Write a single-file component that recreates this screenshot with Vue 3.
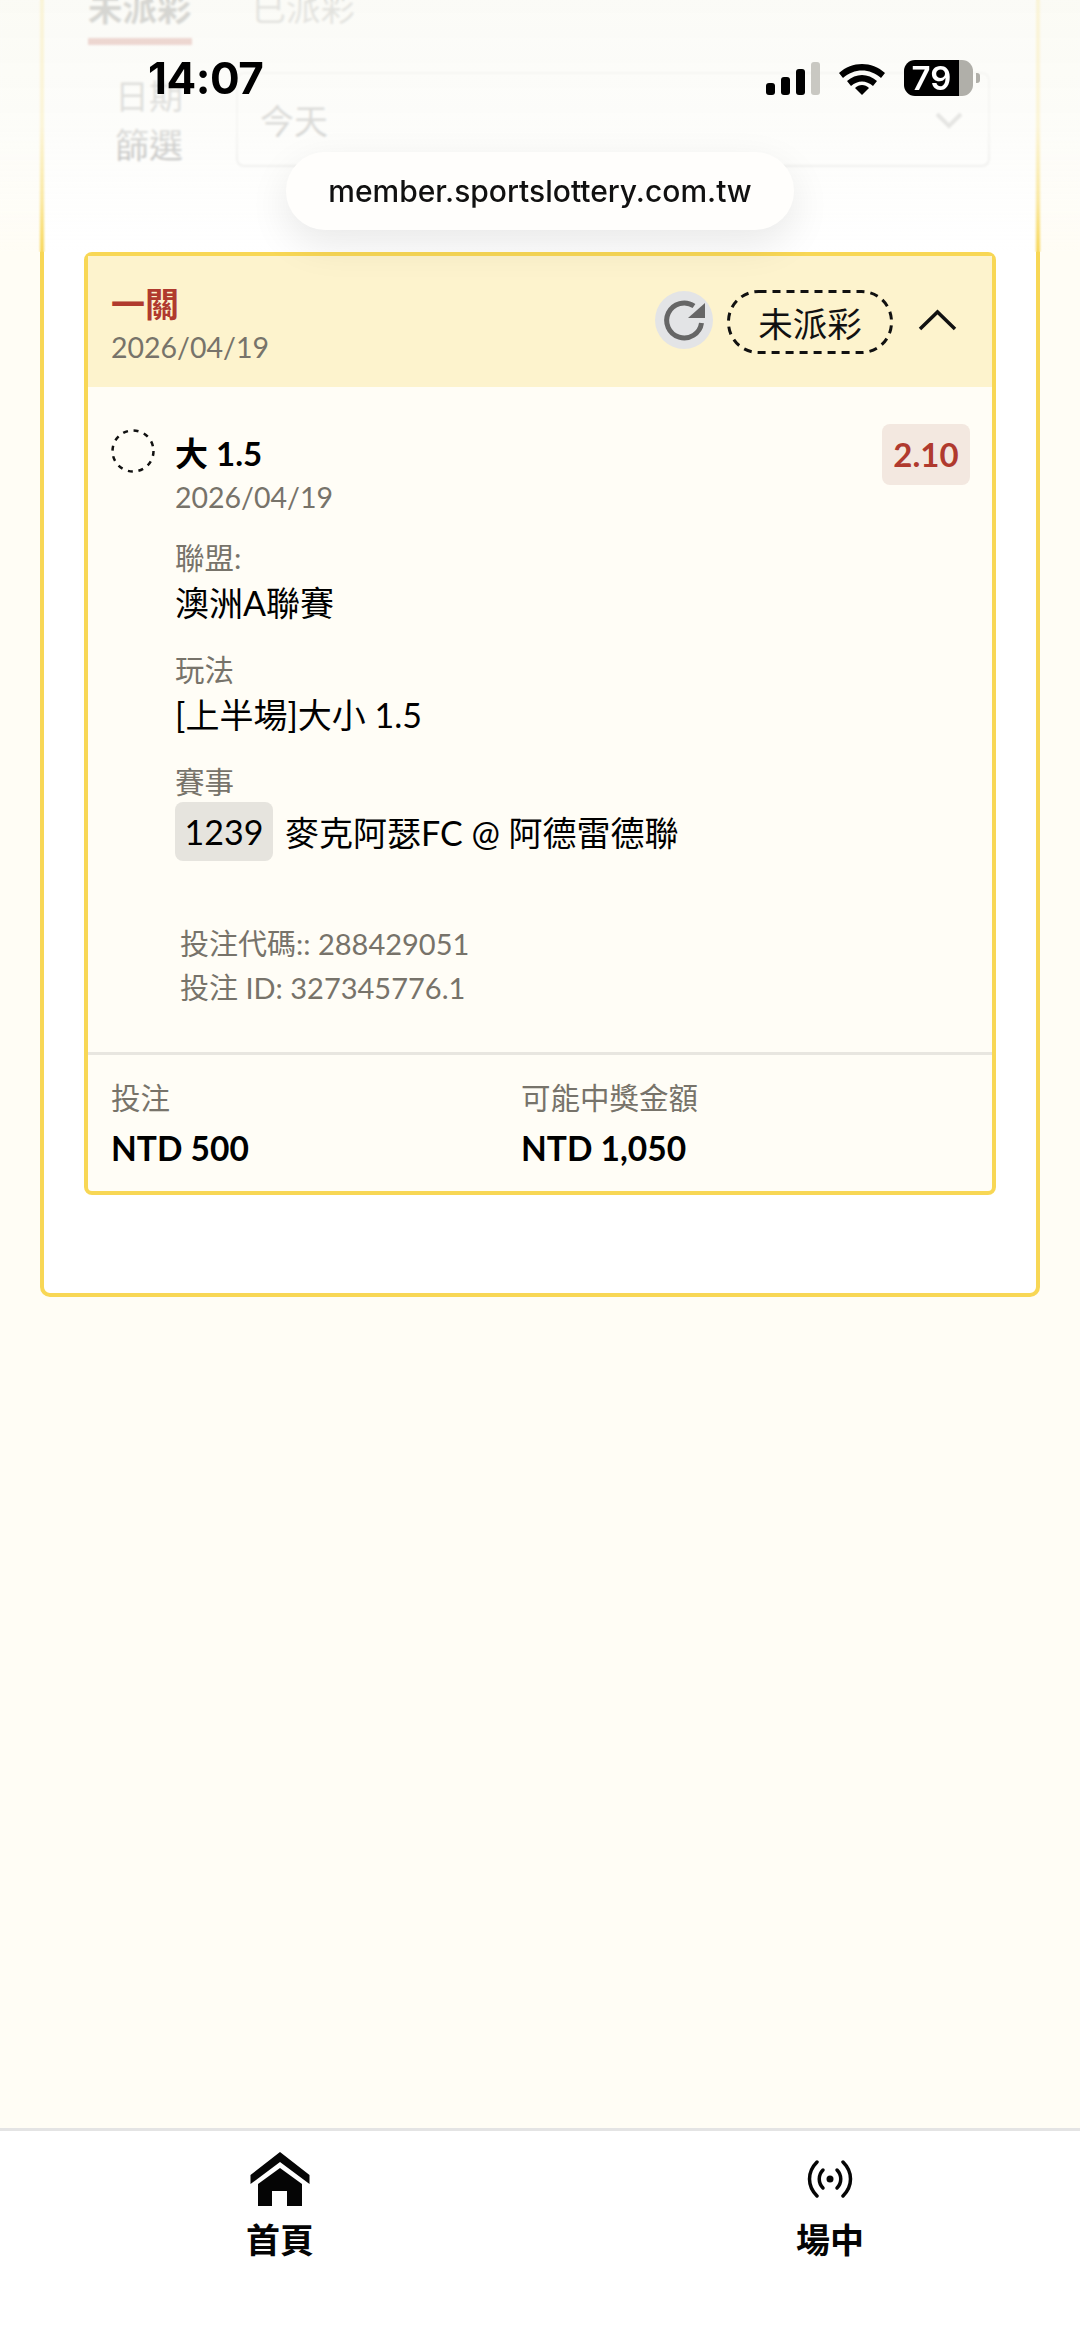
<script setup>
const details = [
  { label: "聯盟:", value: "澳洲A聯賽" },
  { label: "玩法", value: "[上半場]大小 1.5" },
];
</script>

<template>
  <div class="page">
    <section class="panel">
      <div class="tabs">
        <div class="tab active">未派彩</div>
        <div class="tab">已派彩</div>
      </div>
      <div class="filter">
        <div class="filter-label">日期<br />篩選</div>
        <div class="select">
          <span>今天</span>
          <svg width="30" height="18" viewBox="0 0 30 18"><path d="M3 3 L15 15 L27 3" fill="none" stroke="#888" stroke-width="4" /></svg>
        </div>
      </div>

      <div class="ticket">
        <header class="ticket-head">
          <div class="head-left">
            <div class="parlay">一關</div>
            <div class="head-date">2026/04/19</div>
          </div>
          <div class="head-right">
            <div class="refresh">
              <svg width="58" height="58" viewBox="0 0 58 58">
                <path d="M39 15 A17.5 17.5 0 1 0 46.5 32" fill="none" stroke="#666" stroke-width="5" />
                <path d="M50 12 V27 H33 Z" fill="#666" />
              </svg>
            </div>
            <div class="status">
              <svg class="status-dash" width="166" height="64" viewBox="0 0 166 64">
                <rect x="1.5" y="1.5" width="163" height="61" rx="30" fill="none" stroke="#111" stroke-width="3" stroke-dasharray="8 6" />
              </svg>
              未派彩
            </div>
            <svg width="39" height="22" viewBox="0 0 39 22"><path d="M2 20 L19.5 3 L37 20" fill="none" stroke="#111" stroke-width="3.5" /></svg>
          </div>
        </header>

        <div class="ticket-body">
          <svg class="ring" width="44" height="44" viewBox="0 0 44 44">
            <circle cx="22" cy="22" r="20.5" fill="none" stroke="#111" stroke-width="2.5" stroke-dasharray="5 5.73" />
          </svg>
          <div class="main">
            <div class="title">大 1.5</div>
            <div class="muted">2026/04/19</div>
            <div v-for="d in details" :key="d.label" class="detail">
              <div class="muted label">{{ d.label }}</div>
              <div class="value">{{ d.value }}</div>
            </div>
            <div class="detail">
              <div class="muted label">賽事</div>
              <div class="match">
                <span class="match-no">1239</span>
                <span>麥克阿瑟FC @ 阿德雷德聯</span>
              </div>
            </div>
          </div>
          <div class="odds">2.10</div>
        </div>

        <div class="codes">
          <div>投注代碼:: 288429051</div>
          <div>投注 ID: 327345776.1</div>
        </div>

        <footer class="ticket-foot">
          <div class="amount">
            <div class="muted amount-label">投注</div>
            <div class="amount-value">NTD 500</div>
          </div>
          <div class="amount">
            <div class="muted amount-label">可能中獎金額</div>
            <div class="amount-value">NTD 1,050</div>
          </div>
        </footer>
      </div>
    </section>

    <nav class="bottom-nav">
      <div class="nav-item">
        <div class="nav-icon">
          <svg width="60" height="54" viewBox="0 0 60 54">
            <path d="M30 0 L59.5 23 V32 L30 10 L0.5 32 V23 Z" fill="#050505" />
            <path d="M30 16 L8 32 V54 H22 V39 H37 V54 H52 V32 Z" fill="#050505" />
          </svg>
        </div>
        <div class="nav-text">首頁</div>
      </div>
      <div class="nav-item">
        <div class="nav-icon">
          <svg width="46" height="38" viewBox="0 0 46 38" fill="none" stroke="#050505" stroke-width="3.5" stroke-linecap="round">
            <path d="M10 2 C0 12 0 26 10 36" />
            <path d="M36 2 C46 12 46 26 36 36" />
            <path d="M16 10 C11 15 11 23 16 28" />
            <path d="M30 10 C35 15 35 23 30 28" />
            <circle cx="23" cy="19" r="3.5" fill="#050505" stroke="none" />
          </svg>
        </div>
        <div class="nav-text">場中</div>
      </div>
    </nav>

    <!-- browser chrome on top of the page -->
    <div class="fade"></div>
    <div class="status-bar">
      <div class="clock">14:07</div>
      <div class="indicators">
        <svg width="54" height="33" viewBox="0 0 54 33">
          <rect x="0" y="21" width="9" height="12" rx="3" fill="#000" />
          <rect x="15" y="15" width="9" height="18" rx="3" fill="#000" />
          <rect x="30" y="7" width="9" height="26" rx="3" fill="#000" />
          <rect x="45" y="0" width="9" height="33" rx="3" fill="#c9c8c2" />
        </svg>
        <svg width="48" height="34" viewBox="0 0 48 34">
          <path d="M1 12 C14 0 34 0 47 12 L43 17 C32 7 16 7 5 17 Z" fill="#000" />
          <path d="M9 20 C18 12 30 12 39 20 L35 25 C28 19 20 19 13 25 Z" fill="#000" />
          <path d="M17 27 C21 23 27 23 31 27 L24 34 Z" fill="#000" />
        </svg>
        <div class="battery">
          <div class="battery-body">79</div>
          <div class="battery-tip"></div>
        </div>
      </div>
    </div>
    <div class="url-pill">member.sportslottery.com.tw</div>
  </div>
</template>

<style>
body {
  background: #fffdf5;
}
</style>

<style scoped>
.page {
  position: relative;
  width: 1080px;
  height: 2347px;
  overflow: hidden;
  display: flex;
  flex-direction: column;
  background: #fffdf5;
  font-family: Lato, "Noto Sans CJK TC", sans-serif;
  color: #000;
}
.panel {
  margin: -63px 40px 0;
  padding: 43px 40px 98px;
  background: #fff;
  border: 4px solid #f8d755;
  border-radius: 10px;
}
.tabs {
  display: flex;
  gap: 60px;
  padding-left: 4px;
}
.tab {
  font-size: 34.5px;
  line-height: 48px;
  padding-bottom: 6px;
  border-bottom: 7px solid transparent;
  color: #777;
}
.tab.active {
  font-weight: 700;
  border-bottom-color: #b03a2e;
  color: #333;
}
.filter {
  display: flex;
  align-items: center;
  margin-top: 25.5px;
  padding: 0 6px 0 31px;
}
.filter-label {
  width: 68px;
  margin-right: 53px;
  font-size: 34px;
  line-height: 49px;
  color: #666;
}
.select {
  flex: 1;
  height: 95px;
  box-sizing: border-box;
  display: flex;
  align-items: center;
  justify-content: space-between;
  padding: 0 24px 0 22px;
  border: 2px solid #ddd;
  border-radius: 8px;
  font-size: 34px;
  color: #555;
}
.ticket {
  margin-top: 83.5px;
  background: #fffdf6;
  border: 4px solid #f8d755;
  border-radius: 8px;
}
.ticket-head {
  height: 131px;
  display: flex;
  justify-content: space-between;
  padding: 26px 35px 0 23px;
  box-sizing: border-box;
  background: #fdf3cd;
}
.parlay {
  font-size: 34px;
  line-height: 44px;
  font-weight: 700;
  color: #b03a2e;
}
.head-date {
  font-size: 28.5px;
  line-height: 42px;
  color: #77736a;
}
.head-right {
  display: flex;
  align-items: center;
  height: 76px;
}
.refresh {
  width: 58px;
  height: 58px;
  margin-right: 14px;
  border-radius: 50%;
  background: #e3e4e6;
}
.refresh svg,
.nav-icon svg {
  display: block;
}
.status {
  position: relative;
  width: 166px;
  height: 64px;
  box-sizing: border-box;
  margin: 4px 25px 0 0;
  display: flex;
  align-items: center;
  justify-content: center;
  font-size: 34.5px;
  color: #111;
}
.status-dash {
  position: absolute;
  top: 0;
  left: 0;
}
.ticket-body {
  display: flex;
  align-items: flex-start;
  padding: 37px 22px 0 23px;
}
.ring {
  flex: none;
  margin: 5px 20px 0 0;
}
.main {
  flex: 1;
  padding-top: 7px;
}
.title {
  font-size: 33px;
  line-height: 44px;
  font-weight: 700;
}
.muted {
  font-size: 28.5px;
  line-height: 44px;
  color: #77736a;
}
.detail {
  margin-top: 26.5px;
}
.muted + .detail {
  margin-top: 20.5px;
}
.label {
  font-size: 29.5px;
  line-height: 36px;
}
.value {
  margin-top: 5.5px;
  font-size: 34px;
  line-height: 44px;
}
.match {
  display: flex;
  align-items: center;
  gap: 12px;
  margin-top: 2.5px;
  font-size: 34px;
}
.match-no {
  width: 98px;
  height: 59px;
  line-height: 59px;
  text-align: center;
  background: #e6e4de;
  border-radius: 8px;
  font-size: 34px;
}
.odds {
  flex: none;
  width: 88px;
  height: 61px;
  line-height: 61px;
  text-align: center;
  background: #f3e8e0;
  border-radius: 8px;
  font-size: 33px;
  font-weight: 700;
  color: #b03a2e;
}
.codes {
  margin-top: 60.5px;
  padding: 0 0 41.5px 92px;
  font-size: 29px;
  line-height: 44.5px;
  color: #77736a;
}
.ticket-foot {
  display: flex;
  padding: 23px 0 21px 23px;
  border-top: 3px solid #e8e6e0;
}
.amount:first-child {
  width: 410px;
}
.amount-label {
  font-size: 29.5px;
  line-height: 40px;
}
.amount-value {
  margin-top: 8px;
  font-size: 33.5px;
  line-height: 44px;
  font-weight: 700;
}
.bottom-nav {
  margin-top: auto;
  height: 219px;
  box-sizing: border-box;
  display: grid;
  grid-template-columns: 200px 200px;
  column-gap: 350px;
  padding: 21px 0 0 180px;
  background: #fff;
  border-top: 3px solid #e4e4e4;
}
.nav-item {
  display: flex;
  flex-direction: column;
  align-items: center;
}
.nav-icon {
  height: 54px;
  display: flex;
  align-items: center;
}
.nav-text {
  margin-top: 12px;
  font-size: 34px;
  line-height: 44px;
  font-weight: 700;
  color: #050505;
}
.fade {
  position: absolute;
  top: 0;
  left: 0;
  right: 0;
  height: 252px;
  background: linear-gradient(rgba(250, 250, 245, 0.82), rgba(252, 252, 249, 0.8) 50%, rgba(253, 253, 251, 0.45) 80%, rgba(255, 255, 255, 0));
  backdrop-filter: blur(1px);
}
.status-bar {
  position: absolute;
  top: 56px;
  left: 148px;
  width: 832px;
  height: 44px;
  display: flex;
  justify-content: space-between;
  align-items: center;
}
.clock {
  font-family: Inter, sans-serif;
  font-size: 44px;
  font-weight: 700;
  letter-spacing: -0.5px;
  line-height: 44px;
}
.indicators {
  display: flex;
  align-items: center;
  gap: 18px;
}
.battery {
  display: flex;
  align-items: center;
  gap: 3px;
}
.battery-body {
  width: 69px;
  height: 36px;
  box-sizing: border-box;
  padding-right: 14px;
  border-radius: 11px;
  background: linear-gradient(90deg, #000 55px, #b0afa9 55px);
  color: #fff;
  font-family: Inter, sans-serif;
  font-size: 33px;
  font-weight: 600;
  line-height: 36px;
  text-align: center;
}
.battery-tip {
  width: 4px;
  height: 10px;
  background: #b0afa9;
  border-radius: 0 3px 3px 0;
}
.url-pill {
  position: absolute;
  top: 152px;
  left: 286px;
  width: 508px;
  height: 78px;
  line-height: 78px;
  text-align: center;
  background: #fffefc;
  border-radius: 39px;
  box-shadow: 0 14px 40px rgba(0, 0, 0, 0.09);
  font-family: Inter, sans-serif;
  font-size: 30px;
  font-weight: 500;
  color: #111;
}
</style>
